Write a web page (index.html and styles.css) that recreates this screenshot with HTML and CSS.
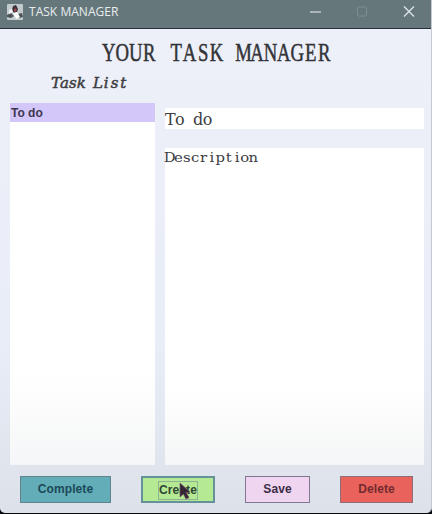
FILE: index.html
```
<!DOCTYPE html>
<html lang="en">
<head>
<meta charset="utf-8">
<title>TASK MANAGER</title>
<link rel="stylesheet" href="styles.css">
</head>
<body>
<div class="window">
  <header class="titlebar">
    <svg class="app-icon" width="16" height="16" viewBox="0 0 16 16"><rect width="16" height="16" rx="1" fill="#c3cacd"/><path d="M6 2l3-1 2 4-1 3-3 1-2-3z" fill="#3d3039"/><path d="M8 4l2 2-2 2-1-2z" fill="#a4484c"/><path d="M0 11l4-2 3 3-3 2-4-1zM11 10l4-1 1 4-4 1z" fill="#4b5259"/><path d="M6 9l4-1 3 5-4 2z" fill="#fff"/><path d="M2 6l3-1 1 3-4 2z" fill="#f3f4f5"/></svg>
    <span class="caption">TASK MANAGER</span>
    <svg class="controls" width="108" height="16" viewBox="0 0 108 16"><path d="M2 8h11" stroke="#d9e2e5" stroke-width="1.2"/><rect x="49.5" y="3" width="9" height="9" rx="1" fill="none" stroke="#7e8d92"/><path d="M96 2.5l10 10M106 2.5l-10 10" stroke="#dce6e9" stroke-width="1.3"/></svg>
  </header>
  <main class="content">
    <h1 class="heading"><svg width="230" height="28"><text class="heading-text" transform="scale(.72 1)" y="23" x="9.5 28.2 46.9 65.6 84.3 103 121.7 140.4 159.1 177.8 196.5 215.2 233.9 252.6 271.3 290 308.7">YOUR TASK MANAGER</text></svg></h1>
    <div class="panes">
      <section class="tasks">
        <h2 class="list-title"><svg width="90" height="20"><text class="list-text" y="14" x="5 13.4 21.8 30.2 38.6 47 55.2 63.6 72.2">Task List</text></svg></h2>
        <ul class="task-list"><li class="task">To do</li></ul>
      </section>
      <section class="details">
        <div class="field"><svg width="100" height="21"><text class="name-text" y="17" x="5.2 14.7 24 33 42.6">To do</text></svg></div>
        <div class="area"><svg width="120" height="20"><text class="desc-text" transform="scale(1.1 1)" y="14" x="4.3 12.1 19.8 27.4 35 42.7 50.3 57.9 65.5 72.4 80.2">Description</text></svg></div>
      </section>
    </div>
    <footer class="actions">
      <button class="btn complete">Complete</button>
      <button class="btn create"><span class="focus">Create</span><svg class="cursor" width="13" height="18" viewBox="0 0 13 18"><path d="M1 1l10 9-4 .5 3 5-3 1.5-2.5-5L1 15z" fill="#342535" stroke="#6d5061" stroke-width=".7"/></svg></button>
      <button class="btn save">Save</button>
      <button class="btn delete">Delete</button>
    </footer>
  </main>
</div>
</body>
</html>
```

FILE: styles.css
```
* { box-sizing: border-box; }
body { margin: 0; background: #080b10; overflow: hidden; }
svg { display: block; overflow: visible; }
.window { width: 432px; height: 513px; display: flex; flex-direction: column; border-right: 1px solid #c6c9ce; border-radius: 0 0 5px 5px; overflow: hidden; }
.titlebar { height: 29px; flex: none; display: flex; align-items: flex-start; padding: 4px 15px 0 7px; background: #66777b; border-bottom: 1px solid #292e38; }
.caption { margin: 0 0 0 6px; font: 12px/16px "Open Sans", "Noto Sans", sans-serif; letter-spacing: .03px; color: #e7edef; white-space: nowrap; }
.controls { margin-left: auto; }
.content { flex: 1; display: flex; flex-direction: column; background: linear-gradient(#edf0f8, #e9edf7 65%, #dde1e9); }
.heading { margin: 9px 0 0 102px; height: 28px; }
.panes { display: grid; grid-template-columns: 145px 259px; gap: 10px; padding-left: 10px; height: 399px; }
.tasks { display: flex; flex-direction: column; }
.list-title { margin: 8px 0 0 41px; height: 29px; }
.task-list { list-style: none; margin: 0; padding: 0; flex: 1; background: linear-gradient(#fff 75%, #f5f6f7); }
.task { height: 19px; padding-left: 1px; background: #d3c7fa; color: #40364f; font: bold 12px/20px "Liberation Sans", sans-serif; letter-spacing: 0; }
.details { display: flex; flex-direction: column; gap: 19px; padding-top: 42px; }
.field { height: 21px; flex: none; background: #fff; }
.area { flex: 1; background: linear-gradient(#fff 75%, #f5f6f7); }
.heading-text, .list-text, .name-text, .desc-text { font-family: "DejaVu Serif", serif; text-anchor: middle; fill: #3d3d42; }
.heading-text { font-family: "Liberation Serif", serif; font-size: 26px; font-weight: normal; fill: #333338; stroke: #333338; stroke-width: .5px; }
.list-text { font-size: 15px; font-weight: normal; font-style: italic; stroke: #3d3d42; stroke-width: .5px; }
.name-text { font-size: 16px; }
.desc-text { font-size: 13.5px; }
.actions { display: flex; padding: 11px 0 0 20px; }
.btn { position: relative; height: 27px; padding: 0; border: 1px solid #65809a; border-radius: 0; font: bold 12px/25px "Liberation Sans", sans-serif; letter-spacing: .1px; }
.complete { width: 91px; background: #62adb8; color: #1c4a58; border-color: #62828d; }
.create { width: 74px; margin-left: 30px; background: #b5e994; color: #314632; border: 2px solid #64919a; }
.focus { display: inline-block; height: 19px; line-height: 17px; border: 1px solid #8eb391; vertical-align: middle; }
.cursor { position: absolute; left: 36px; top: 4px; }
.save { width: 65px; margin-left: 30px; background: #efd5ef; color: #3c2d46; border-color: #817795; }
.delete { width: 73px; margin-left: 30px; background: #e9635c; color: #742b30; border-color: #8f6c79; }
```
